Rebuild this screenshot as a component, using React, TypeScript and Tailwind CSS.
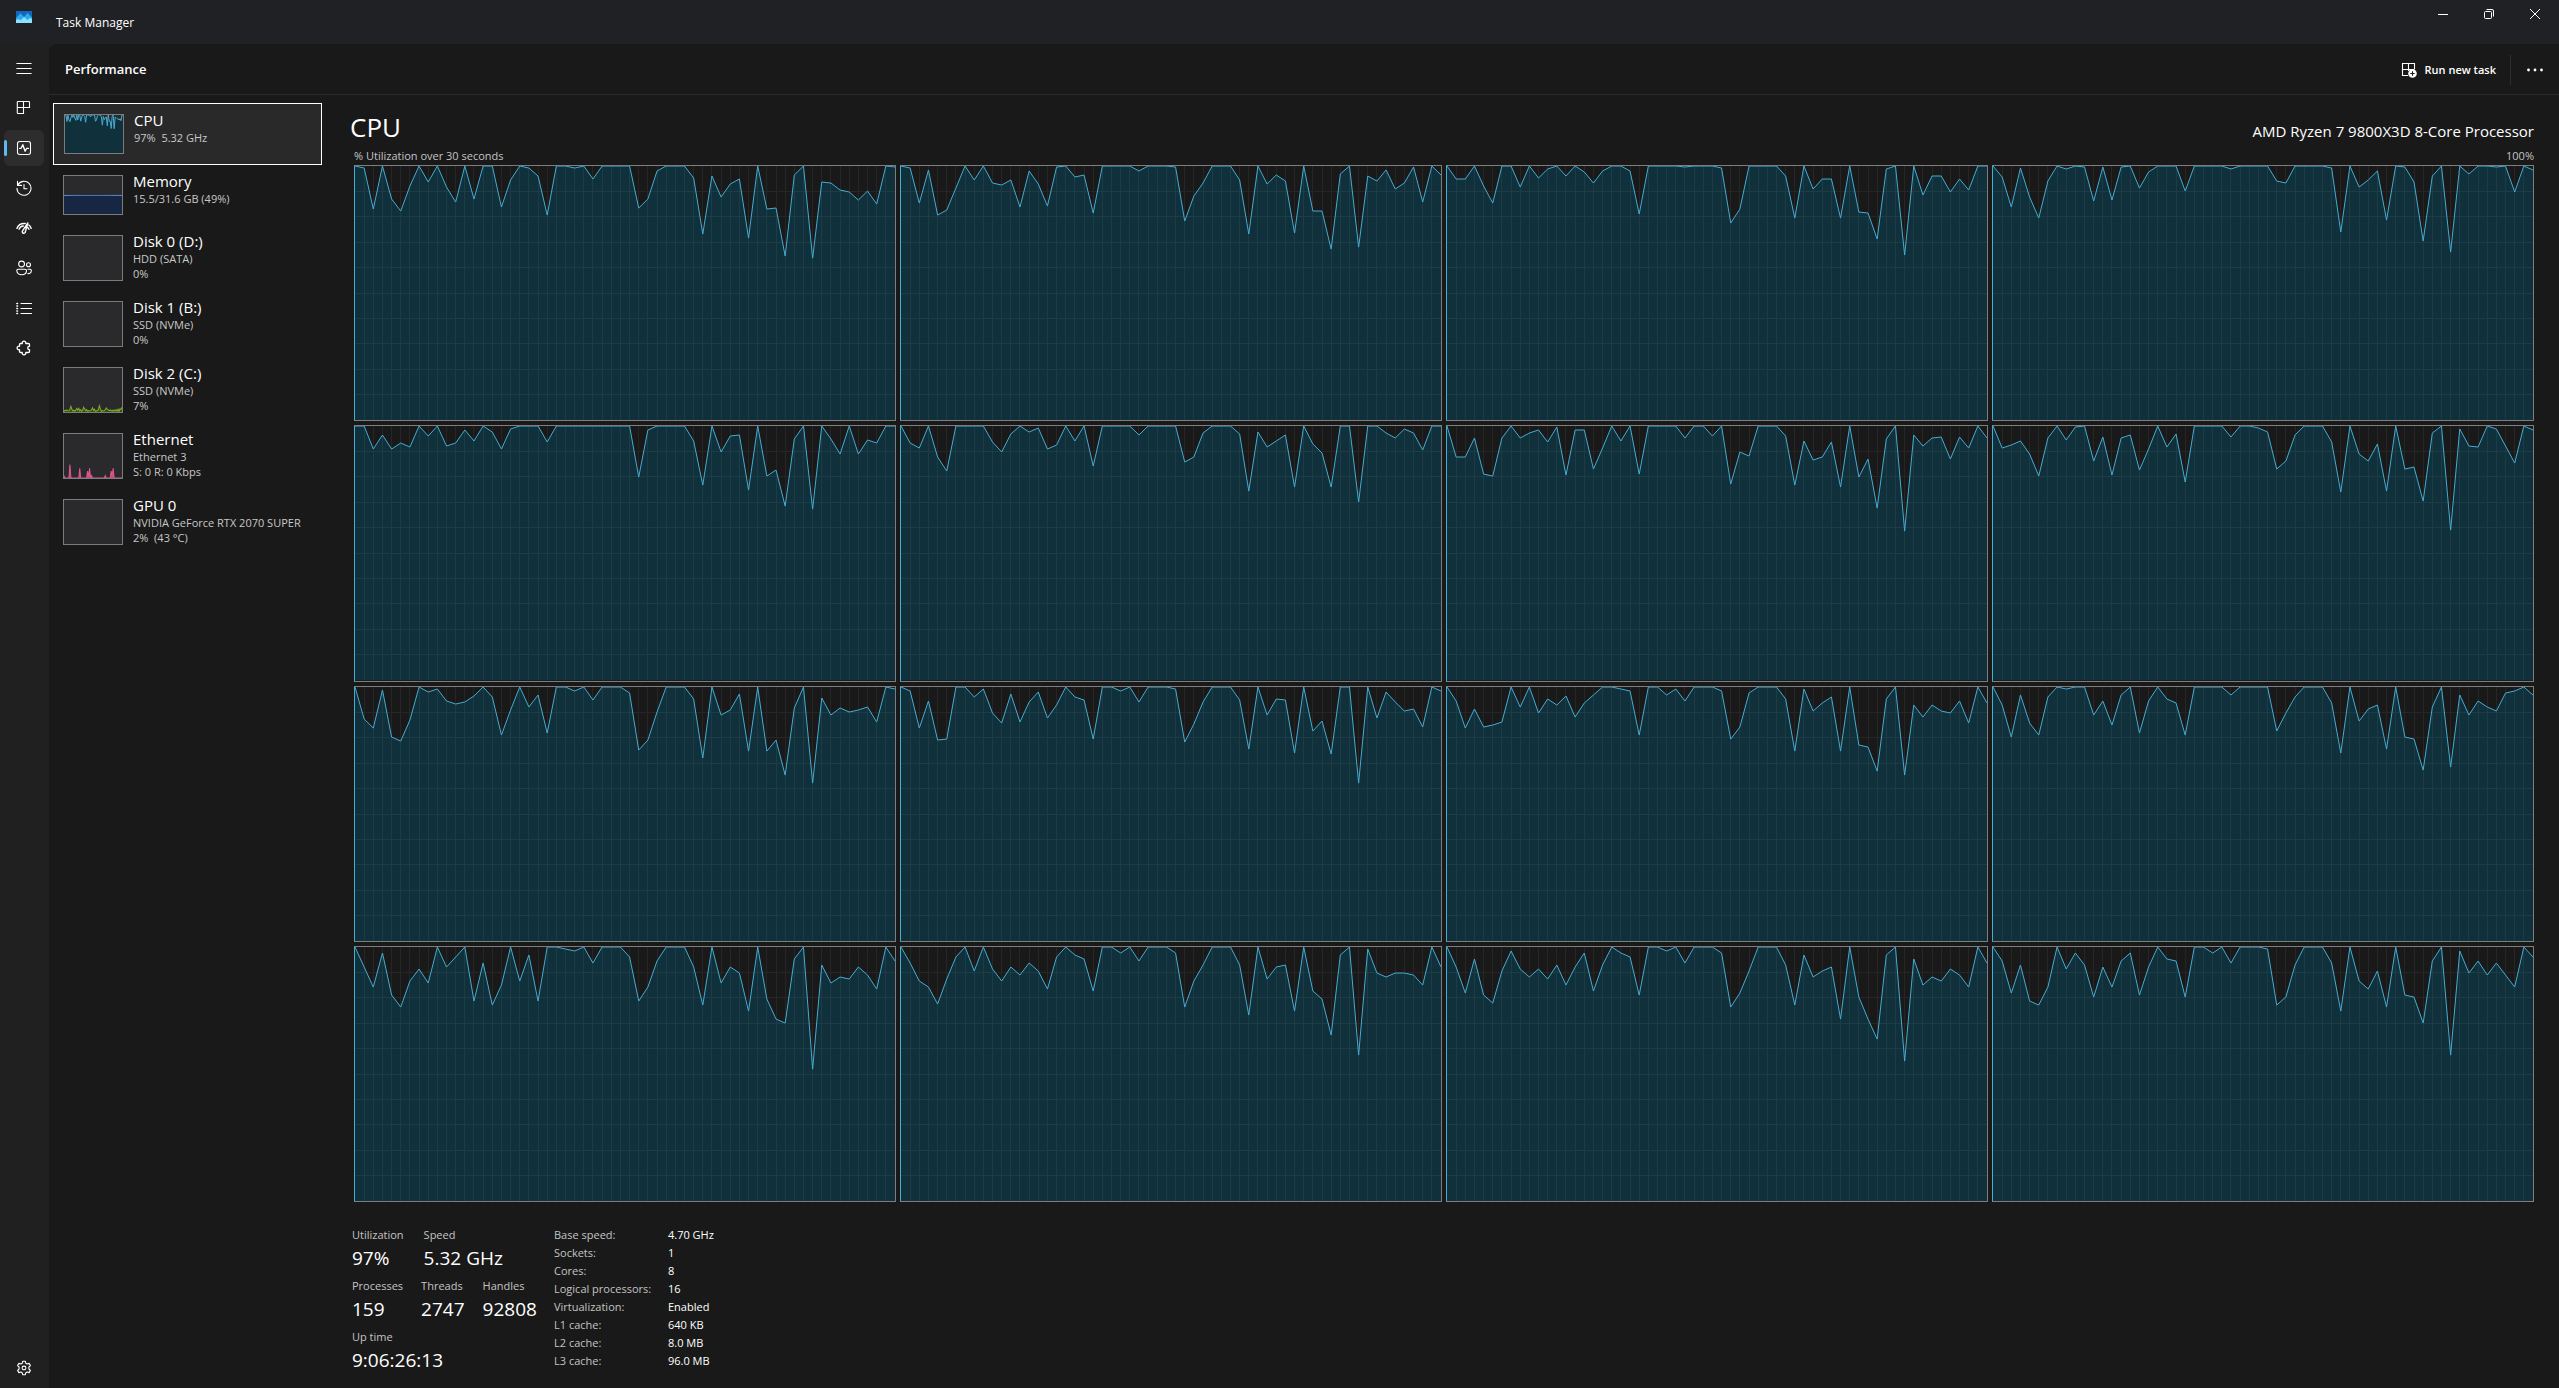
import type { ReactNode } from 'react';

type GraphTone = 'cpu' | 'memory' | 'disk' | 'network';

// Distance below 100% of every sample, on a scale of 254 (0 = fully busy)
const CORES: number[][] = [
  [0, 2, 43, 0, 33, 45, 20, 0, 16, 0, 21, 36, 0, 33, 0, 0, 41, 14, 0, 2, 10, 49, 0, 0, 2, 0, 13, 0, 0, 0, 0, 42, 33, 5, 0, 0, 0, 12, 68, 10, 31, 18, 13, 72, 0, 43, 42, 90, 9, 0, 92, 16, 17, 24, 26, 34, 25, 38, 0, 1],
  [0, 2, 37, 4, 49, 44, 22, 0, 14, 0, 17, 19, 14, 41, 5, 18, 40, 1, 0, 11, 9, 47, 0, 0, 0, 0, 5, 0, 0, 0, 1, 55, 30, 17, 0, 0, 0, 14, 68, 0, 18, 9, 15, 67, 0, 45, 45, 83, 8, 0, 81, 10, 15, 4, 23, 17, 1, 36, 0, 9],
  [0, 13, 13, 0, 20, 37, 0, 0, 21, 0, 12, 3, 0, 10, 0, 6, 17, 5, 0, 0, 5, 48, 0, 0, 0, 0, 1, 0, 0, 0, 2, 57, 43, 0, 0, 0, 0, 10, 52, 0, 23, 13, 13, 52, 0, 46, 47, 73, 3, 0, 89, 0, 29, 10, 10, 26, 13, 24, 0, 0],
  [0, 11, 41, 2, 31, 52, 15, 0, 3, 0, 1, 35, 1, 34, 1, 0, 22, 6, 0, 0, 0, 25, 0, 0, 0, 0, 3, 0, 0, 0, 0, 15, 17, 0, 0, 0, 0, 2, 66, 0, 21, 14, 5, 54, 0, 1, 16, 75, 10, 0, 86, 0, 8, 0, 0, 1, 0, 26, 0, 4],
  [0, 0, 23, 9, 23, 17, 21, 0, 10, 0, 20, 17, 4, 15, 0, 6, 23, 3, 0, 0, 0, 16, 0, 0, 0, 0, 0, 0, 0, 0, 0, 51, 4, 0, 0, 0, 0, 15, 59, 0, 26, 10, 9, 64, 0, 50, 44, 80, 13, 0, 83, 0, 13, 28, 0, 28, 14, 17, 0, 0],
  [0, 17, 22, 0, 31, 45, 0, 0, 0, 0, 16, 26, 8, 0, 6, 2, 23, 19, 0, 15, 0, 40, 0, 0, 0, 0, 9, 0, 0, 0, 0, 36, 31, 7, 0, 0, 0, 8, 65, 6, 21, 15, 9, 61, 0, 18, 27, 61, 0, 0, 76, 0, 0, 7, 12, 3, 7, 24, 0, 0],
  [0, 31, 31, 12, 48, 50, 12, 0, 12, 7, 4, 16, 1, 49, 4, 4, 43, 22, 0, 15, 0, 48, 0, 0, 0, 0, 12, 0, 0, 10, 0, 58, 26, 30, 0, 0, 0, 10, 59, 15, 34, 31, 16, 61, 0, 51, 33, 82, 13, 0, 105, 9, 20, 12, 11, 33, 11, 22, 0, 12],
  [0, 22, 19, 15, 28, 50, 12, 0, 14, 1, 0, 35, 11, 49, 12, 9, 44, 23, 0, 21, 8, 56, 0, 0, 0, 0, 11, 0, 0, 2, 6, 43, 35, 9, 0, 0, 0, 16, 66, 0, 28, 35, 18, 65, 0, 43, 41, 75, 7, 0, 104, 3, 20, 21, 0, 3, 20, 37, 0, 4],
  [0, 32, 41, 3, 50, 54, 33, 0, 5, 2, 14, 17, 15, 9, 0, 10, 48, 23, 0, 20, 8, 46, 0, 0, 4, 0, 13, 0, 0, 0, 6, 63, 53, 25, 0, 0, 0, 12, 71, 0, 28, 23, 7, 64, 0, 64, 53, 88, 21, 0, 96, 11, 28, 21, 25, 23, 20, 35, 0, 2],
  [0, 4, 41, 14, 53, 52, 0, 0, 10, 2, 26, 36, 7, 35, 15, 5, 31, 18, 0, 10, 13, 52, 0, 0, 4, 0, 15, 0, 0, 0, 2, 55, 37, 15, 0, 0, 0, 13, 62, 0, 28, 12, 13, 66, 0, 44, 34, 67, 0, 0, 96, 0, 31, 5, 15, 24, 22, 40, 0, 4],
  [0, 14, 41, 22, 40, 38, 35, 0, 20, 0, 26, 12, 18, 9, 30, 16, 8, 0, 0, 2, 4, 48, 0, 0, 8, 2, 14, 0, 0, 0, 4, 52, 40, 6, 0, 0, 0, 12, 64, 2, 24, 16, 10, 64, 0, 58, 60, 84, 12, 0, 88, 18, 30, 18, 24, 26, 14, 36, 0, 16],
  [0, 18, 50, 8, 36, 48, 10, 0, 2, 0, 0, 28, 14, 38, 8, 0, 46, 14, 0, 12, 16, 48, 0, 0, 0, 0, 8, 0, 0, 0, 0, 44, 26, 10, 0, 0, 0, 16, 66, 0, 34, 22, 18, 62, 0, 50, 52, 83, 20, 0, 80, 8, 28, 14, 20, 24, 6, 4, 0, 8],
  [0, 20, 40, 6, 48, 60, 34, 22, 36, 0, 20, 10, 0, 54, 16, 58, 38, 0, 34, 8, 54, 0, 0, 2, 4, 0, 16, 0, 0, 0, 10, 54, 40, 14, 0, 0, 0, 20, 58, 0, 36, 20, 26, 64, 0, 52, 72, 76, 12, 0, 122, 18, 36, 30, 32, 20, 28, 42, 0, 14],
  [0, 16, 34, 40, 57, 32, 10, 0, 24, 0, 22, 34, 20, 28, 16, 24, 42, 10, 0, 8, 12, 44, 0, 0, 6, 0, 14, 0, 0, 0, 6, 60, 34, 18, 0, 0, 0, 18, 68, 0, 32, 20, 18, 64, 0, 44, 52, 88, 8, 0, 108, 2, 26, 30, 26, 26, 28, 38, 0, 20],
  [0, 20, 46, 12, 48, 56, 24, 4, 22, 30, 22, 32, 18, 38, 20, 6, 44, 18, 0, 6, 10, 48, 0, 0, 4, 0, 16, 0, 0, 0, 6, 60, 46, 24, 0, 0, 0, 18, 58, 8, 30, 24, 20, 72, 0, 50, 72, 92, 8, 0, 114, 12, 38, 30, 34, 22, 28, 40, 0, 16],
  [0, 14, 46, 18, 54, 58, 40, 0, 22, 6, 18, 50, 20, 40, 14, 6, 48, 20, 0, 12, 14, 50, 0, 0, 6, 0, 16, 0, 0, 0, 2, 58, 50, 18, 0, 0, 0, 16, 64, 0, 34, 42, 24, 60, 0, 48, 50, 76, 14, 0, 108, 4, 26, 14, 28, 16, 28, 40, 0, 10],
];

const MEMORY = Array.from({ length: 60 }, () => 130);

const DISK_C = [250, 244, 246, 242, 246, 248, 240, 221, 238, 248, 244, 250, 242, 234, 244, 232, 248, 240, 250, 242, 226, 236, 246, 240, 250, 246, 248, 246, 242, 230, 244, 238, 250, 248, 244, 240, 217, 236, 250, 246, 248, 246, 240, 230, 238, 242, 246, 242, 248, 244, 250, 242, 248, 240, 250, 238, 250, 236, 240, 226];

const ETHERNET = [240, 254, 254, 254, 254, 254, 176, 250, 254, 254, 254, 254, 254, 254, 254, 254, 198, 254, 254, 254, 254, 254, 254, 252, 214, 246, 198, 248, 240, 254, 254, 254, 254, 254, 254, 254, 254, 254, 254, 254, 254, 254, 240, 254, 254, 254, 254, 254, 214, 244, 198, 254, 254, 254, 254, 254, 254, 254, 254, 254];

const TONES: Record<GraphTone, { line: string; fill: string }> = {
  cpu: { line: 'stroke-[#45acd2]', fill: 'fill-[#10303b]' },
  memory: { line: 'stroke-[#5b8fe0]', fill: 'fill-[#172642]' },
  disk: { line: 'stroke-[#7fb023]', fill: 'fill-[#3b4a20]' },
  network: { line: 'stroke-[#e0568c]', fill: 'fill-[#c04b7c]' },
};

const GRID_PATH = [
  ...Array.from({ length: 58 }, (_, i) => `M${(i + 1) * 10} 0V254`),
  ...Array.from({ length: 9 }, (_, i) => `M0 ${(i + 1) * 25.4}H590`),
].join('');

function Graph({ samples, tone, grid = false }: { samples: number[]; tone: GraphTone; grid?: boolean }) {
  const points = samples.map((drop, i) => `${i * 10},${drop}`).join(' ');
  return (
    <svg viewBox="0 0 590 254" preserveAspectRatio="none" className="block size-full" aria-hidden="true">
      <polygon points={`0,254 ${points} 590,254`} className={TONES[tone].fill} />
      {grid && (
        <path
          d={GRID_PATH}
          fill="none"
          className="stroke-white/6"
          vectorEffect="non-scaling-stroke"
          shapeRendering="crispEdges"
        />
      )}
      <polyline
        points={points}
        fill="none"
        className={TONES[tone].line}
        vectorEffect="non-scaling-stroke"
      />
    </svg>
  );
}

function Icon({ children }: { children: ReactNode }) {
  return (
    <svg
      viewBox="0 0 16 16"
      className="size-4"
      fill="none"
      stroke="currentColor"
      strokeWidth="1.1"
      strokeLinecap="round"
      strokeLinejoin="round"
      aria-hidden="true"
    >
      {children}
    </svg>
  );
}

const NAV_ITEMS: { label: string; icon: ReactNode }[] = [
  {
    label: 'Open navigation',
    icon: <path d="M.8 3.5h14.4M.8 8.500h14.4M.8 13.500h14.4" strokeWidth="1" />,
  },
  {
    label: 'Processes',
    icon: <path d="M2 1.500h10.800a.7.7 0 0 1 .7.7v5.300H7.500v6H2a.7.7 0 0 1-.7-.7V2.200a.7.7 0 0 1 .7-.7zM7.500 1.500v6H1.300" />,
  },
  {
    label: 'Performance',
    icon: (
      <>
        <rect x="1.5" y="1.5" width="13" height="13" rx="2.2" />
        <path d="M3.6 8.3h1.5l1.7-3.6 2.3 6.6 1.6-3h1.8" strokeWidth="1.3" />
      </>
    ),
  },
  {
    label: 'App history',
    icon: (
      <>
        <path d="M1.7 5.2A7 7 0 1 1 1 8.4" />
        <path d="M1.5 1.4v4h4M8 4.6v4.2h3" />
      </>
    ),
  },
  {
    label: 'Startup apps',
    icon: (
      <>
        <path d="M.9 8.4C2.2 5 5 3.2 9.2 3.5M3 9.2C4 7 5.4 6.200 7.300 6M12.800 5c1.100.8 1.900 2 2.400 3.400M11.400 7.400c.8.500 1.300 1.100 1.600 2" strokeWidth="1.4" />
        <path d="M11.800 3 6.700 10.700a1.500 1.500 0 1 0 2.500 1.500z" strokeWidth="1.4" />
      </>
    ),
  },
  {
    label: 'Users',
    icon: (
      <>
        <circle cx="5.6" cy="4" r="2.9" />
        <circle cx="12.5" cy="4.7" r="2" />
        <path d="M2 9.3h7.3a1.2 1.2 0 0 1 1.2 1.2c0 2.6-1.9 4.2-4.8 4.2S.8 13.1.8 10.5A1.2 1.2 0 0 1 2 9.3zM12 9.3h2.2a1.1 1.1 0 0 1 1.1 1.1c0 2-1.2 3.2-3.4 3.2" />
      </>
    ),
  },
  {
    label: 'Details',
    icon: (
      <>
        <path d="M5 3.500h10.500M5 8.500h10.500M5 13.500h10.500" />
        <path d="M.9 3.500h.6M.9 6h.6M.9 8.500h.6M.9 11h.6M.9 13.500h.6" strokeWidth="1.6" />
      </>
    ),
  },
  {
    label: 'Services',
    icon: (
      <path
        d="M4.500 3.500h1.800a1.800 1.800 0 1 1 3.400 0h2.800a1 1 0 0 1 1 1v1.800h-.6a1.800 1.800 0 0 0 0 3.400h.6v1.800a1 1 0 0 1-1 1H9.700a1.800 1.800 0 1 1-3.400 0H4.500a1 1 0 0 1-1-1V9.700a1.800 1.800 0 1 1 0-3.400V4.500a1 1 0 0 1 1-1z"
        strokeWidth="1.3"
      />
    ),
  },
];

const ACTIVE_NAV = 'Performance';

function NavButton({ label, icon }: { label: string; icon: ReactNode }) {
  const active = label === ACTIVE_NAV;
  return (
    <button
      type="button"
      aria-label={label}
      className={`relative flex h-9 w-10 items-center justify-center rounded-md ${active ? 'bg-[#2d2d2d]' : ''}`}
    >
      {active && <span className="absolute left-0 h-4 w-[3px] rounded-full bg-[#5cbcf0]" />}
      <Icon>{icon}</Icon>
    </button>
  );
}

function TitleBar() {
  return (
    <header className="flex h-11 shrink-0 items-start justify-between bg-[#202124]">
      <div className="flex items-start pl-4">
        <svg viewBox="0 0 16 12" className="mt-[11px] h-3 w-4" aria-hidden="true">
          <rect width="16" height="12" fill="#1166bd" />
          <path d="M0 7 4.5 2.2 8 6l3.5-4L16 6.500V12H0z" fill="#2fa9ee" />
          <path d="M0 9l2.5-1 2 1.500L8 6l3.500 3L14 7l2 1v4H0z" fill="#8fe0fb" />
        </svg>
        <h1 className="ml-6 mt-[14px] text-[12px] leading-[18px]">Task Manager</h1>
      </div>
      <div className="flex pr-px">
        <button type="button" aria-label="Minimize" className="flex h-7 w-[46px] items-center justify-center">
          <svg viewBox="0 0 10 10" className="size-[10px]" stroke="currentColor" aria-hidden="true">
            <path d="M0 5.500h10" />
          </svg>
        </button>
        <button type="button" aria-label="Restore" className="flex h-7 w-[46px] items-center justify-center">
          <svg viewBox="0 0 10 10" className="size-[10px]" fill="none" stroke="currentColor" aria-hidden="true">
            <rect x=".5" y="2.5" width="7" height="7" rx="1" />
            <path d="M2.500.5H8A1.500 1.500 0 0 1 9.500 2v5.500" />
          </svg>
        </button>
        <button type="button" aria-label="Close" className="flex h-7 w-[46px] items-center justify-center">
          <svg viewBox="0 0 10 10" className="size-[10px]" stroke="currentColor" aria-hidden="true">
            <path d="m0 0 10 10M10 0 0 10" />
          </svg>
        </button>
      </div>
    </header>
  );
}

interface Resource {
  name: string;
  lines: string[];
  graph?: { samples: number[]; tone: GraphTone };
  selected?: boolean;
}

const RESOURCES: Resource[] = [
  { name: 'CPU', lines: ['97%  5.32 GHz'], graph: { samples: CORES[0], tone: 'cpu' }, selected: true },
  { name: 'Memory', lines: ['15.5/31.6 GB (49%)'], graph: { samples: MEMORY, tone: 'memory' } },
  { name: 'Disk 0 (D:)', lines: ['HDD (SATA)', '0%'] },
  { name: 'Disk 1 (B:)', lines: ['SSD (NVMe)', '0%'] },
  { name: 'Disk 2 (C:)', lines: ['SSD (NVMe)', '7%'], graph: { samples: DISK_C, tone: 'disk' } },
  { name: 'Ethernet', lines: ['Ethernet 3', 'S: 0 R: 0 Kbps'], graph: { samples: ETHERNET, tone: 'network' } },
  { name: 'GPU 0', lines: ['NVIDIA GeForce RTX 2070 SUPER', '2%  (43 °C)'] },
];

function ResourceItem({ resource }: { resource: Resource }) {
  const { name, lines, graph, selected } = resource;
  return (
    <button
      type="button"
      className={`flex w-full items-start gap-[10px] px-[10px] pt-[7px] pb-[10px] text-left ${
        selected ? 'border border-white bg-[#29292a]' : ''
      }`}
    >
      <span
        className={`mt-[3px] w-[60px] shrink-0 border border-[#7c7c7c] bg-[#2a2a2c] ${
          lines.length > 1 ? 'h-[46px]' : 'h-10'
        }`}
      >
        {graph && <Graph samples={graph.samples} tone={graph.tone} />}
      </span>
      <span className="block">
        <span className="block text-[15px] leading-[19px]">{name}</span>
        {lines.map((line) => (
          <span key={line} className="block whitespace-pre text-[11px] leading-[15px] text-[#c8c8c8]">
            {line}
          </span>
        ))}
      </span>
    </button>
  );
}

function Stat({ label, value }: { label: string; value: string }) {
  return (
    <div>
      <dt className="text-[11px] leading-[18px] text-[#c4c4c4]">{label}</dt>
      <dd className="text-[19px] leading-7">{value}</dd>
    </div>
  );
}

const SPECS = [
  ['Base speed:', '4.70 GHz'],
  ['Sockets:', '1'],
  ['Cores:', '8'],
  ['Logical processors:', '16'],
  ['Virtualization:', 'Enabled'],
  ['L1 cache:', '640 KB'],
  ['L2 cache:', '8.0 MB'],
  ['L3 cache:', '96.0 MB'],
];

function CpuStats() {
  return (
    <section className="mt-6 flex items-start pb-[14px]">
      <div className="flex w-[202px] flex-col gap-[5px]">
        <dl className="flex gap-5">
          <Stat label="Utilization" value="97%" />
          <Stat label="Speed" value="5.32 GHz" />
        </dl>
        <dl className="flex gap-[18px]">
          <Stat label="Processes" value="159" />
          <Stat label="Threads" value="2747" />
          <Stat label="Handles" value="92808" />
        </dl>
        <dl className="flex">
          <Stat label="Up time" value="9:06:26:13" />
        </dl>
      </div>
      <table className="text-left text-[11px] leading-[18px]">
        <tbody>
          {SPECS.map(([label, value]) => (
            <tr key={label}>
              <th scope="row" className="w-[114px] p-0 font-normal text-[#c4c4c4]">
                {label}
              </th>
              <td className="p-0">{value}</td>
            </tr>
          ))}
        </tbody>
      </table>
    </section>
  );
}

export default function App() {
  return (
    <div className="flex h-screen flex-col overflow-hidden bg-[#202020] font-['Segoe_UI','Open_Sans','Noto_Sans',sans-serif] text-white">
      <TitleBar />
      <div className="flex min-h-0 flex-1">
        <nav className="flex w-[49px] shrink-0 flex-col gap-1 pt-[6px] pb-[2px] pl-1">
          {NAV_ITEMS.map((item) => (
            <NavButton key={item.label} label={item.label} icon={item.icon} />
          ))}
          <div className="mt-auto">
            <NavButton
              label="Settings"
              icon={
                <>
                  <circle cx="8" cy="8" r="1.9" />
                  <path d="M6.7 1.3h2.6l.5 2 1.3.7 2-.6 1.3 2.2L12.9 7v2l1.500 1.400-1.300 2.200-2-.6-1.300.7-.5 2H6.700l-.5-2-1.300-.7-2 .6-1.300-2.200L3.100 9V7L1.600 5.600l1.300-2.200 2 .6 1.300-.7z" />
                </>
              }
            />
          </div>
        </nav>

        <main className="flex min-w-0 flex-1 flex-col rounded-tl-lg bg-[#191919]">
          {/* command bar */}
          <div className="flex h-[51px] shrink-0 items-center justify-between border-b border-[#2b2b2b] pt-[2px] pl-4">
            <h2 className="text-[13px] font-semibold">Performance</h2>
            <div className="flex items-center">
              <button type="button" className="flex h-8 items-center gap-2 px-[14px] text-[11px] font-semibold">
                <svg viewBox="0 0 16 16" className="size-4" fill="none" stroke="currentColor" aria-hidden="true">
                  <path d="M7 13.500H1.500v-12h12V7M7.500 1.500V9M1.500 7.500h12" strokeWidth="1.1" />
                  <circle cx="11.5" cy="11.5" r="4.3" fill="currentColor" stroke="none" />
                  <path d="M11.500 9.300v4.400M9.300 11.500h4.400" stroke="#191919" strokeWidth="1.1" />
                </svg>
                Run new task
              </button>
              <span className="h-[30px] w-px bg-[#2f2f2f]" />
              <button type="button" aria-label="See more" className="flex h-8 w-12 items-center justify-center">
                <svg viewBox="0 0 16 4" className="h-1 w-4" fill="currentColor" aria-hidden="true">
                  <circle cx="1.5" cy="2" r="1.4" />
                  <circle cx="8" cy="2" r="1.4" />
                  <circle cx="14.5" cy="2" r="1.4" />
                </svg>
              </button>
            </div>
          </div>

          <div className="flex min-h-0 flex-1">
            {/* resource list */}
            <aside className="ml-1 w-[269px] shrink-0 pt-2">
              {RESOURCES.map((resource) => (
                <ResourceItem key={resource.name} resource={resource} />
              ))}
            </aside>

            <div className="ml-[28px] flex min-w-0 flex-1 flex-col pr-[25px]">
              <div className="flex h-[53px] shrink-0 items-center justify-between pt-[10px]">
                <h2 className="text-[26px] leading-8">CPU</h2>
                <p className="pt-2 text-[15px] leading-6">AMD Ryzen 7 9800X3D 8-Core Processor</p>
              </div>
              <div className="flex h-[17px] shrink-0 justify-between pl-1 text-[11px] leading-4 text-[#c4c4c4]">
                <span>% Utilization over 30 seconds</span>
                <span>100%</span>
              </div>
              {/* one graph per logical processor */}
              <div className="ml-1 grid min-h-0 flex-1 grid-cols-4 grid-rows-4 gap-1">
                {CORES.map((samples, index) => (
                  <div
                    key={index}
                    role="img"
                    aria-label={`CPU ${index} utilization`}
                    className="min-h-0 border border-[#7d7d7d] border-l-[#45acd2]"
                  >
                    <Graph samples={samples} tone="cpu" grid />
                  </div>
                ))}
              </div>
              <div className="pl-[2px]">
                <CpuStats />
              </div>
            </div>
          </div>
        </main>
      </div>
    </div>
  );
}
